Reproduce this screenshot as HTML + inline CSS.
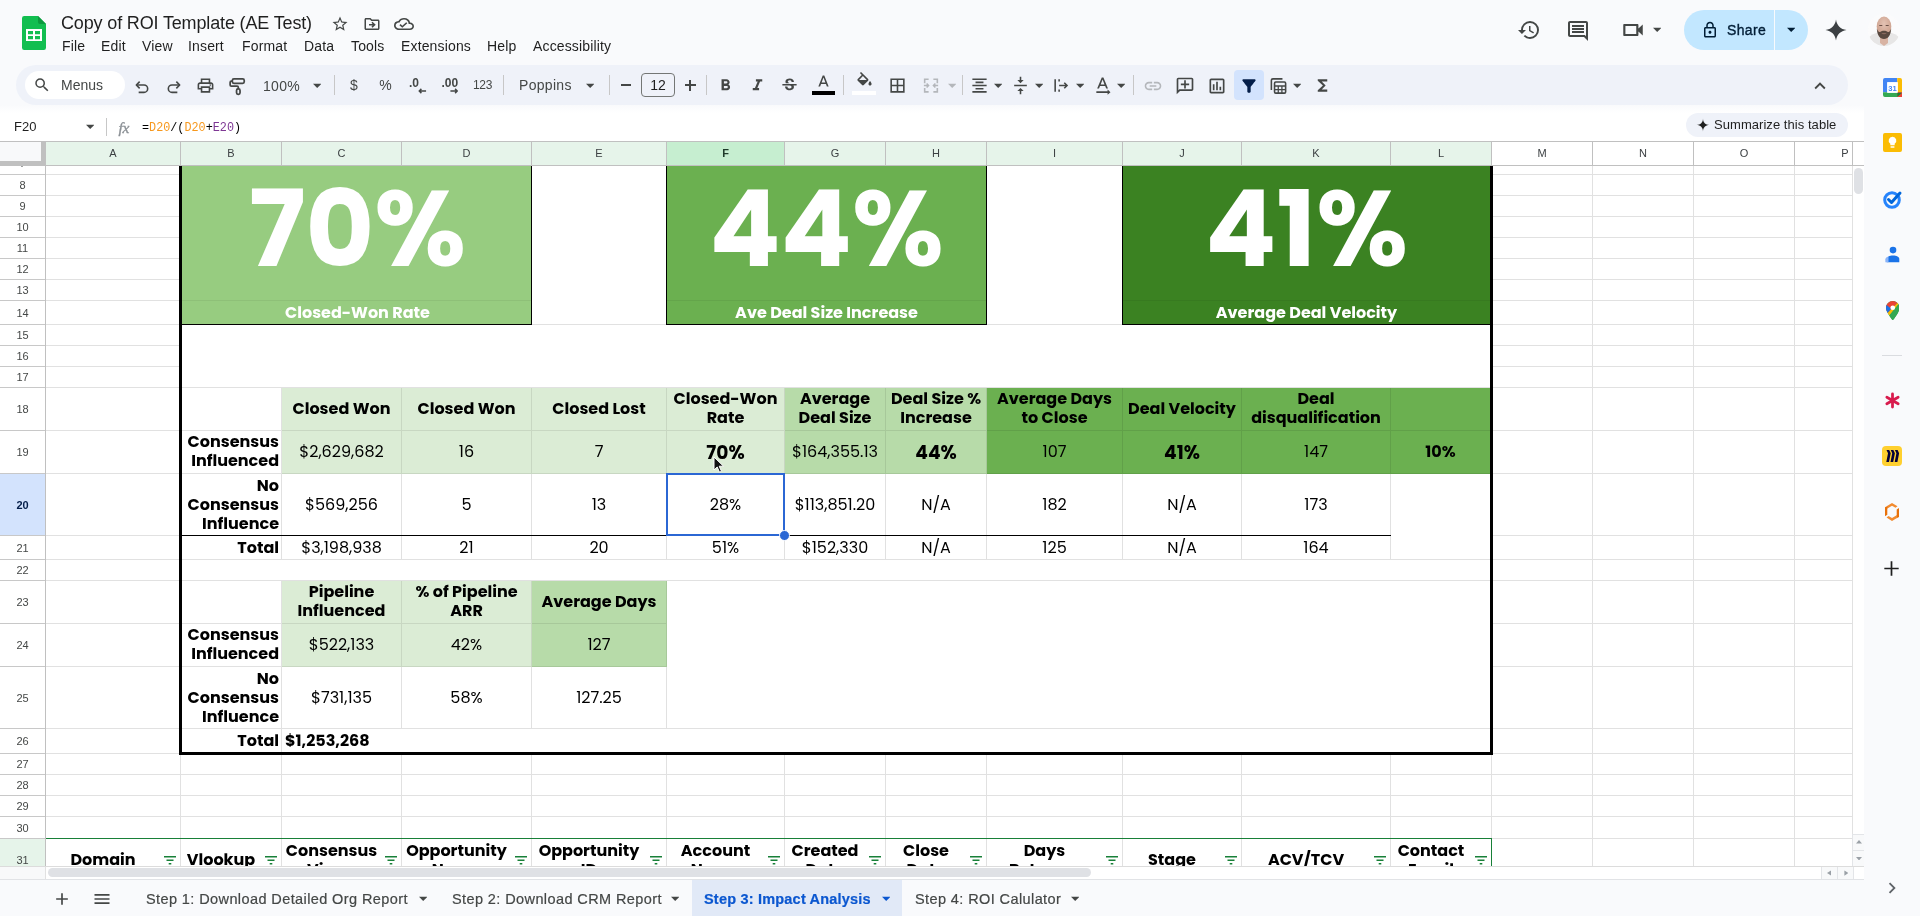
<!DOCTYPE html>
<html lang="en"><head><meta charset="utf-8"><title>Copy of ROI Template (AE Test) - Google Sheets</title>
<style>
*{box-sizing:border-box;margin:0;padding:0}
html,body{width:1920px;height:916px;overflow:hidden;background:#f9fafc}
body{position:relative;font-family:"Liberation Sans",sans-serif;color:#1f1f1f;-webkit-font-smoothing:antialiased}
.a{position:absolute}
#app svg{display:block}
#app div,#app span.p{position:absolute}
.ui{font-family:"Liberation Sans",sans-serif;white-space:nowrap}
.menu{top:37px;height:18px;line-height:18px;font-size:14px;color:#1f1f1f;white-space:nowrap;letter-spacing:.15px}
.ic{fill:#444746}
.sep{width:1px;height:20px;top:75px;background:#c7c7c7}
.tb{top:65px;height:40px}
/* grid */
.ch{top:142px;height:23px;line-height:23px;text-align:center;font-size:11px;color:#3c4043;white-space:nowrap}
.rh{left:0;width:45px;text-align:center;font-size:11px;color:#444746;white-space:nowrap}
.c{font-family:"Poppins","Liberation Sans",sans-serif;display:flex;align-items:center;justify-content:center;text-align:center;color:#000;font-size:16px;line-height:19px;white-space:nowrap;overflow:hidden}
.b{font-weight:700}
.r{justify-content:flex-end;text-align:right}
.hl{background:#e1e1e1;height:1px}
.vl{background:#e1e1e1;width:1px}
.tab{top:880px;height:36px;line-height:38px;font-size:14.500px;-webkit-text-stroke:.2px;color:#444746;white-space:nowrap;font-weight:400}
</style></head>
<body><div id="app" style="will-change:transform">
<!-- ===== title bar ===== -->
<div style="left:22px;top:16px;width:24px;height:34px">
<svg width="24" height="34" viewBox="0 0 24 34"><path d="M2.200 0H16l8 8v23.800A2.200 2.200 0 0 1 21.800 34H2.200A2.200 2.200 0 0 1 0 31.800V2.200A2.200 2.200 0 0 1 2.200 0z" fill="#12be50"/><path d="M16 0l8 8h-6A2 2 0 0 1 16 6z" fill="#0c9a3e"/><path d="M4 13h16v12H4zM6 15v3.200h5V15zM13 15v3.200h5V15zM6 20v3.200h5V20zM13 20v3.200h5V20z" fill="#fff" fill-rule="evenodd"/></svg></div>
<div class="ui" style="left:61px;top:10px;height:26px;line-height:26px;font-size:18px;color:#1f1f1f;letter-spacing:-.15px" id="title">Copy of ROI Template (AE Test)</div>
<div style="left:331px;top:15px"><svg width="18" height="18" viewBox="0 0 24 24" class="ic"><path d="M22 9.240l-7.190-.620L12 2 9.190 8.630 2 9.240l5.460 4.730L5.820 21 12 17.270 18.180 21l-1.630-7.030L22 9.240zM12 15.400l-3.760 2.270 1-4.280-3.320-2.880 4.380-.380L12 6.100l1.710 4.040 4.380.380-3.320 2.880 1 4.280L12 15.400z"/></svg></div>
<div style="left:363px;top:15px"><svg width="18" height="18" viewBox="0 0 24 24" class="ic"><path d="M20 6h-8l-2-2H4c-1.100 0-2 .900-2 2v12c0 1.100.900 2 2 2h16c1.100 0 2-.900 2-2V8c0-1.100-.900-2-2-2zm0 12H4V6h5.170l2 2H20v10zm-7.160-6H8v2h4.840l-1.590 1.590L12.660 17 17 13l-4.340-4-1.410 1.410L12.840 12z"/></svg></div>
<div style="left:394px;top:15px"><svg width="20" height="18" viewBox="0 0 24 24" class="ic" preserveAspectRatio="none"><path d="M19.350 10.040A7.490 7.490 0 0 0 12 4C9.110 4 6.600 5.640 5.350 8.040A5.994 5.994 0 0 0 0 14c0 3.310 2.690 6 6 6h13c2.760 0 5-2.240 5-5 0-2.640-2.050-4.780-4.650-4.960zM19 18H6c-2.210 0-4-1.790-4-4s1.790-4 4-4h.710C7.370 7.690 9.480 6 12 6c3.040 0 5.500 2.460 5.500 5.500v.500H19c1.660 0 3 1.340 3 3s-1.340 3-3 3zm-9-3.820l-2.090-2.090L6.500 13.500 10 17l6.010-6.010-1.410-1.410z"/></svg></div>
<!-- menus -->
<div class="menu ui" style="left:62px">File</div>
<div class="menu ui" style="left:101px">Edit</div>
<div class="menu ui" style="left:142px">View</div>
<div class="menu ui" style="left:188px">Insert</div>
<div class="menu ui" style="left:242px">Format</div>
<div class="menu ui" style="left:304px">Data</div>
<div class="menu ui" style="left:351px">Tools</div>
<div class="menu ui" style="left:401px">Extensions</div>
<div class="menu ui" style="left:487px">Help</div>
<div class="menu ui" style="left:533px">Accessibility</div>
<!-- right icons -->
<div style="left:1517px;top:18px"><svg width="24" height="24" viewBox="0 0 24 24" class="ic"><path d="M13 3a9 9 0 0 0-9 9H1l3.890 3.890.070.140L9 12H6c0-3.870 3.130-7 7-7s7 3.130 7 7-3.130 7-7 7c-1.930 0-3.680-.790-4.940-2.060l-1.420 1.420A8.954 8.954 0 0 0 13 21a9 9 0 0 0 0-18zm-1 5v5l4.250 2.520.770-1.280-3.520-2.090V8z"/></svg></div>
<div style="left:1566px;top:19px"><svg width="24" height="24" viewBox="0 0 24 24" class="ic"><path d="M21.990 4c0-1.100-.890-2-1.990-2H4c-1.100 0-2 .900-2 2v12c0 1.100.900 2 2 2h14l4 4-.010-18zM20 4v13.170L18.830 16H4V4h16zM6 12h12v2H6zm0-3h12v2H6zm0-3h12v2H6z"/></svg></div>
<div style="left:1620px;top:18px"><svg width="26" height="24" viewBox="0 0 24 24" class="ic" preserveAspectRatio="none"><path d="M15 8v8H5V8h10m1-2H4c-.550 0-1 .450-1 1v10c0 .550.450 1 1 1h12c.550 0 1-.450 1-1v-3.500l4 4v-11l-4 4V7c0-.550-.450-1-1-1z"/></svg></div>
<div style="left:1652.8px;top:27.05px"><svg width="8.400" height="5.900" viewBox="7 9 10 7" class="ic"><path d="M7 10l5 5 5-5z"/></svg></div>
<!-- share -->
<div style="left:1684px;top:10px;width:124px;height:40px;border-radius:20px;background:#c2e7ff"></div>
<div style="left:1774px;top:10px;width:1px;height:40px;background:#f9fafc"></div>
<div style="left:1701px;top:21px"><svg width="18" height="18" viewBox="0 0 24 24" fill="#001d35"><path d="M18 8h-1V6c0-2.760-2.240-5-5-5S7 3.240 7 6v2H6c-1.100 0-2 .900-2 2v10c0 1.100.900 2 2 2h12c1.100 0 2-.900 2-2V10c0-1.100-.900-2-2-2zM9 6c0-1.660 1.340-3 3-3s3 1.340 3 3v2H9V6zm9 14H6V10h12v10zm-6-3c1.100 0 2-.900 2-2s-.900-2-2-2-2 .900-2 2 .900 2 2 2z"/></svg></div>
<div class="ui" style="left:1727px;top:20px;height:20px;line-height:20px;font-size:14px;font-weight:400;-webkit-text-stroke:.35px;color:#001d35;letter-spacing:.35px">Share</div>
<div style="left:1786.8px;top:27.05px"><svg width="8.400" height="5.900" viewBox="7 9 10 7" fill="#001d35"><path d="M7 10l5 5 5-5z"/></svg></div>
<!-- gemini -->
<div style="left:1825px;top:19px"><svg width="22" height="22" viewBox="0 0 24 24" fill="#3c4043"><path d="M12 .500C12.900 7 17 11.100 23.500 12 17 12.900 12.900 17 12 23.500 11.100 17 7 12.900 .500 12 7 11.100 11.100 7 12 .500z"/></svg></div>
<!-- avatar -->
<div style="left:1868px;top:14px;width:32px;height:32px;border-radius:50%;overflow:hidden;background:#fbfbfc">
<svg width="32" height="32" viewBox="0 0 32 32"><defs><radialGradient id="sk" cx=".5" cy=".35" r=".7"><stop offset="0" stop-color="#e3c2b3"/><stop offset="1" stop-color="#c89a86"/></radialGradient></defs><rect width="32" height="32" fill="#fbfbfc"/><path d="M0 24c3-3 7-5 10-5.500h12c3 .500 7 2.500 10 5.500v8H0z" fill="#e7e6e6"/><path d="M12 22h8v7l-4 3-4-3z" fill="#d8b3a3"/><ellipse cx="16" cy="12.500" rx="7.300" ry="10" fill="url(#sk)"/><path d="M8.800 14.500c.300 6.500 3 10.500 7.200 10.500s6.900-4 7.200-10.500c-.800 2.500-2 3.600-3.300 3.600-1.200-1-2.400-1.300-3.900-1.300s-2.700.300-3.900 1.300c-1.300 0-2.500-1.100-3.300-3.600z" fill="#5a4940"/><path d="M13.200 19.500c1.800-.600 3.800-.600 5.600 0-1.800.900-3.800.900-5.600 0z" fill="#8a6a5e"/><path d="M11.300 11.500h3M17.700 11.500h3" stroke="#6b5047" stroke-width="1"/></svg></div>
<!-- ===== toolbar ===== -->
<div style="left:16px;top:65px;width:1832px;height:40px;border-radius:20px;background:#eff2f9"></div>
<div style="left:25px;top:71px;width:100px;height:28px;border-radius:14px;background:#fff"></div>
<div style="left:33px;top:76px"><svg width="18" height="18" viewBox="0 0 24 24" class="ic"><path d="M15.500 14h-.790l-.280-.270A6.471 6.471 0 0 0 16 9.500 6.500 6.500 0 1 0 9.500 16c1.610 0 3.090-.590 4.230-1.570l.270.280v.790l5 4.990L20.490 19l-4.990-5zm-6 0C7.010 14 5 11.990 5 9.500S7.010 5 9.500 5 14 7.010 14 9.500 11.990 14 9.500 14z"/></svg></div>
<div class="ui" style="left:61px;top:75px;height:20px;line-height:20px;font-size:14px;color:#444746">Menus</div>
<!-- undo / redo -->
<div style="left:134px;top:78.500px"><svg width="16" height="16" viewBox="0 0 24 24" fill="none" stroke="#444746" stroke-width="2.400" stroke-linejoin="round" stroke-linecap="butt"><path d="M8.500 4L3.500 9l5 5"/><path d="M4 9h11a5.500 5.500 0 0 1 0 11H7"/></svg></div>
<div style="left:165.500px;top:78.500px"><svg width="16" height="16" viewBox="0 0 24 24" fill="none" stroke="#444746" stroke-width="2.400" stroke-linejoin="round"><path d="M15.500 4l5 5-5 5"/><path d="M20 9H9a5.500 5.500 0 0 0 0 11h8"/></svg></div>
<div style="left:196px;top:76px"><svg width="19" height="19" viewBox="0 0 24 24" class="ic"><path d="M19 8h-1V3H6v5H5c-1.660 0-3 1.340-3 3v6h4v4h12v-4h4v-6c0-1.660-1.340-3-3-3zM8 5h8v3H8V5zm8 14H8v-4h8v4zm2-4v-2H6v2H4v-4c0-.550.450-1 1-1h14c.550 0 1 .450 1 1v4h-2z"/><circle cx="18" cy="11.500" r="1"/></svg></div>
<div style="left:227.500px;top:77px"><svg width="19" height="19" viewBox="0 0 24 24" fill="none" stroke="#444746" stroke-width="2.200" stroke-linejoin="round"><rect x="5.500" y="2.500" width="15" height="5.600" rx="2"/><path d="M5.500 5.300H4.200a1.500 1.500 0 0 0-1.500 1.500v3.200a1.500 1.500 0 0 0 1.500 1.500h7.300a1.500 1.500 0 0 1 1.500 1.500v2"/><rect x="10.800" y="15" width="4.400" height="7" rx="2"/></svg></div>
<div class="ui" style="left:263px;top:76px;height:20px;line-height:20px;font-size:14px;color:#444746;letter-spacing:.3px">100%</div>
<div style="left:312.8px;top:83.05px"><svg width="8.400" height="5.900" viewBox="7 9 10 7" class="ic"><path d="M7 10l5 5 5-5z"/></svg></div>
<div class="sep" style="left:334px"></div>
<div class="ui" style="left:349px;top:75px;width:10px;height:20px;line-height:20px;font-size:14px;color:#444746;text-align:center">$</div>
<div class="ui" style="left:378px;top:75px;width:15px;height:20px;line-height:20px;font-size:14px;color:#444746;text-align:center">%</div>
<div class="ui" style="left:409px;top:75px;height:16px;line-height:16px;font-size:12px;color:#444746;font-weight:700">.0</div>
<div style="left:418px;top:88px"><svg width="8.500" height="6" viewBox="0 0 10 7" fill="none" stroke="#444746" stroke-width="1.700"><path d="M9.500 3.500H1.500M4 1L1.500 3.500 4 6"/></svg></div>
<div class="ui" style="left:441.500px;top:75px;height:16px;line-height:16px;font-size:12px;color:#444746;font-weight:700">.00</div>
<div style="left:449.500px;top:88px"><svg width="8.500" height="6" viewBox="0 0 10 7" fill="none" stroke="#444746" stroke-width="1.700"><path d="M.500 3.500h8M6 1l2.500 2.500L6 6"/></svg></div>
<div class="ui" style="left:473px;top:76px;height:18px;line-height:18px;font-size:12px;color:#444746;letter-spacing:-.3px">123</div>
<div class="sep" style="left:503px"></div>
<div class="ui" style="left:519px;top:75px;height:20px;line-height:20px;font-size:14px;color:#444746;letter-spacing:.3px">Poppins</div>
<div style="left:585.8px;top:83.05px"><svg width="8.400" height="5.900" viewBox="7 9 10 7" class="ic"><path d="M7 10l5 5 5-5z"/></svg></div>
<div class="sep" style="left:609px"></div>
<div style="left:620.500px;top:84.300px;width:10px;height:1.500px;background:#444746"></div>
<div style="left:641px;top:73px;width:34px;height:24px;border:1px solid #747775;border-radius:4px"></div>
<div class="ui" style="left:641px;top:75px;width:34px;height:20px;line-height:20px;font-size:14px;color:#1f1f1f;text-align:center">12</div>
<div style="left:684.500px;top:84.300px;width:11px;height:1.500px;background:#444746"></div>
<div style="left:689.250px;top:79.500px;width:1.500px;height:11px;background:#444746"></div>
<div class="sep" style="left:706px"></div>
<div style="left:716px;top:76px"><svg width="19" height="19" viewBox="0 0 24 24" class="ic"><path d="M15.600 10.790c.970-.670 1.650-1.770 1.650-2.790 0-2.260-1.750-4-4-4H7v14h7.040c2.090 0 3.710-1.700 3.710-3.790 0-1.520-.860-2.820-2.150-3.420zM10 6.500h3c.830 0 1.500.670 1.500 1.500s-.670 1.500-1.500 1.500h-3v-3zm3.500 9H10v-3h3.500c.830 0 1.500.670 1.500 1.500s-.670 1.500-1.500 1.500z"/></svg></div>
<div style="left:748px;top:76px"><svg width="19" height="19" viewBox="0 0 24 24" class="ic"><path d="M10 4v3h2.210l-3.420 8H6v3h8v-3h-2.210l3.420-8H18V4z"/></svg></div>
<div style="left:780px;top:76px"><svg width="19" height="19" viewBox="0 0 24 24" class="ic"><path d="M6.850 7.080C6.850 4.370 9.450 3 12.240 3c1.640 0 3 .490 3.900 1.280.770.650 1.460 1.730 1.460 3.240h-3.010c0-.310-.050-.590-.150-.850-.290-.860-1.200-1.280-2.250-1.280-1.860 0-2.340 1.020-2.340 1.700 0 .480.250.880.740 1.210.380.250.770.480 1.410.700H7.390c-.210-.340-.540-.890-.540-1.920zM21 12v-2H3v2h9.620c1.150.450 1.960.750 1.960 1.970 0 1-.810 1.670-2.280 1.670-1.540 0-2.930-.540-2.930-2.510H6.400c0 .550.080 1.130.240 1.580.810 2.290 3.290 3.300 5.670 3.300 2.270 0 5.300-.890 5.300-4.050 0-.300-.010-1.160-.480-1.940H21V12z"/></svg></div>
<div style="left:814px;top:73px"><svg width="19" height="19" viewBox="0 0 24 24" class="ic"><path d="M11 3L5.500 17h2.250l1.120-3h6.250l1.120 3h2.250L13 3h-2zm-1.380 9L12 5.670 14.380 12H9.620z"/></svg></div>
<div style="left:812px;top:91px;width:23px;height:4px;background:#000"></div>
<div class="sep" style="left:843px"></div>
<div style="left:855px;top:72px"><svg width="19" height="19" viewBox="0 0 24 24" class="ic"><path d="M16.560 8.940L7.620 0 6.210 1.410l2.380 2.380-5.150 5.150c-.590.590-.590 1.540 0 2.120l5.500 5.500c.290.290.680.440 1.060.440s.770-.150 1.060-.440l5.500-5.500c.590-.580.590-1.530 0-2.120zM5.210 10L10 5.210 14.790 10H5.210zM19 11.500s-2 2.170-2 3.500c0 1.100.900 2 2 2s2-.900 2-2c0-1.330-2-3.500-2-3.500z"/></svg></div>
<div style="left:852px;top:91px;width:24px;height:4px;background:#fff"></div>
<div style="left:888px;top:76px"><svg width="19" height="19" viewBox="0 0 24 24" class="ic"><path d="M3 3v18h18V3H3zm8 16H5v-6h6v6zm0-8H5V5h6v6zm8 8h-6v-6h6v6zm0-8h-6V5h6v6z"/></svg></div>
<div style="left:921px;top:76px"><svg width="20" height="19" viewBox="0 0 24 24" fill="none" stroke="#b4b7bb" stroke-width="2"><path d="M4 9V4h5M15 4h5v5M4 15v5h5M15 20h5v-5" /><path d="M3 12h6M6.500 9.500L9 12l-2.500 2.500M21 12h-6M17.500 9.500L15 12l2.500 2.500" stroke-width="1.800"/></svg></div>
<div style="left:947.8px;top:83.05px"><svg width="8.400" height="5.900" viewBox="7 9 10 7" fill="#b4b7bb"><path d="M7 10l5 5 5-5z"/></svg></div>
<div class="sep" style="left:962px"></div>
<div style="left:970px;top:76px"><svg width="19" height="19" viewBox="0 0 24 24" class="ic"><path d="M7 15v2h10v-2H7zm-4 6h18v-2H3v2zm0-8h18v-2H3v2zm4-6v2h10V7H7zM3 3v2h18V3H3z"/></svg></div>
<div style="left:993.8px;top:83.05px"><svg width="8.400" height="5.900" viewBox="7 9 10 7" class="ic"><path d="M7 10l5 5 5-5z"/></svg></div>
<div style="left:1011px;top:76px"><svg width="19" height="19" viewBox="0 0 24 24" class="ic"><path d="M8 19h3v4h2v-4h3l-4-4-4 4zm8-14h-3V1h-2v4H8l4 4 4-4zM4 11v2h16v-2H4z"/></svg></div>
<div style="left:1034.8px;top:83.05px"><svg width="8.400" height="5.900" viewBox="7 9 10 7" class="ic"><path d="M7 10l5 5 5-5z"/></svg></div>
<div style="left:1052px;top:76px"><svg width="19" height="19" viewBox="0 0 24 24" fill="none" stroke="#444746" stroke-width="2"><path d="M4 4v16M9 4v3M9 17v3M9 12h10M15.500 8.500L19 12l-3.500 3.500"/></svg></div>
<div style="left:1075.8px;top:83.05px"><svg width="8.400" height="5.900" viewBox="7 9 10 7" class="ic"><path d="M7 10l5 5 5-5z"/></svg></div>
<div style="left:1093px;top:75px"><svg width="20" height="21" viewBox="0 0 24 25" class="ic"><path d="M10.500 3L5 16h2.200l1.200-3h6.200l1.200 3H18L12.500 3h-2zm-1.300 8.200L11.500 5.400l2.300 5.800H9.200z"/><path d="M4 19.500h13.500v-2.200l3.500 3.200-3.500 3.200v-2.200H4z"/></svg></div>
<div style="left:1116.8px;top:83.05px"><svg width="8.400" height="5.900" viewBox="7 9 10 7" class="ic"><path d="M7 10l5 5 5-5z"/></svg></div>
<div class="sep" style="left:1133px"></div>
<div style="left:1143px;top:76px"><svg width="20" height="20" viewBox="0 0 24 24" fill="#b4b7bb"><path d="M3.900 12c0-1.710 1.390-3.100 3.100-3.100h4V7H7c-2.760 0-5 2.240-5 5s2.240 5 5 5h4v-1.900H7c-1.710 0-3.100-1.390-3.100-3.100zM8 13h8v-2H8v2zm9-6h-4v1.900h4c1.710 0 3.100 1.390 3.100 3.100s-1.390 3.100-3.100 3.100h-4V17h4c2.760 0 5-2.240 5-5s-2.240-5-5-5z"/></svg></div>
<div style="left:1175px;top:76px"><svg width="20" height="20" viewBox="0 0 24 24" class="ic"><path d="M2 4c0-1.100.900-2 2-2h16c1.100 0 2 .900 2 2v12c0 1.100-.900 2-2 2H6l-4 4V4zm2 13.170L5.170 16H20V4H4v13.170zM11 5h2v4h4v2h-4v4h-2v-4H7V9h4z"/></svg></div>
<div style="left:1207px;top:76px"><svg width="20" height="20" viewBox="0 0 24 24" class="ic"><path d="M9 17H7v-7h2v7zm4 0h-2V7h2v10zm4 0h-2v-4h2v4zm2 2H5V5h14v14zm0-16H5c-1.100 0-2 .900-2 2v14c0 1.100.900 2 2 2h14c1.100 0 2-.900 2-2V5c0-1.100-.900-2-2-2z"/></svg></div>
<div style="left:1234px;top:70px;width:30px;height:30px;border-radius:4px;background:#d3e3fd"></div>
<div style="left:1239px;top:76px"><svg width="20" height="20" viewBox="0 0 24 24" fill="#041e49"><path d="M4.250 5.610C6.270 8.200 10 13 10 13v6c0 .550.450 1 1 1h2c.550 0 1-.450 1-1v-6s3.720-4.800 5.740-7.390A.998.998 0 0 0 18.950 4H5.040c-.830 0-1.300.950-.790 1.610z"/></svg></div>
<div style="left:1269px;top:76px"><svg width="19" height="20" viewBox="0 0 24 24" fill="none" stroke="#444746" stroke-width="2"><path d="M3 17V5a2 2 0 0 1 2-2h12"/><rect x="7" y="7" width="14" height="14" rx="1.500"/><path d="M7 12h14M11.700 12v9M16.300 12v9M7 16.500h14" stroke-width="1.600"/></svg></div>
<div style="left:1292.8px;top:83.05px"><svg width="8.400" height="5.900" viewBox="7 9 10 7" class="ic"><path d="M7 10l5 5 5-5z"/></svg></div>
<div style="left:1313px;top:76px"><svg width="19" height="19" viewBox="0 0 24 24" class="ic"><path d="M18 4H6v2l6.500 6L6 18v2h12v-3h-7l5-5-5-5h7z"/></svg></div>
<div style="left:1809px;top:75px"><svg width="22" height="22" viewBox="0 0 24 24" class="ic"><path d="M12 8l-6 6 1.410 1.410L12 10.830l4.590 4.580L18 14z"/></svg></div>
<!-- ===== formula bar ===== -->
<div style="left:0;top:105px;width:1864px;height:37px;background:linear-gradient(#f9fafc 0,#fff 8px)"></div>
<div class="ui" style="left:14px;top:117px;height:20px;line-height:20px;font-size:13px;color:#1f1f1f">F20</div>
<div style="left:85.8px;top:124.05px"><svg width="8.400" height="5.900" viewBox="7 9 10 7" class="ic"><path d="M7 10l5 5 5-5z"/></svg></div>
<div style="left:106px;top:118px;width:1px;height:18px;background:#c7c7c7"></div>
<div style="left:118.500px;top:118px;height:20px;line-height:20px;font-family:'Liberation Serif',serif;font-style:italic;font-size:15.500px;color:#8c9196;-webkit-text-stroke:.35px #8c9196;letter-spacing:-.3px">fx</div>
<div style="left:141.700px;top:117.500px;height:20px;line-height:20px;font-family:'Liberation Mono',monospace;font-size:13.300px;color:#000;white-space:pre;transform:scaleX(.886);transform-origin:0 50%">=<span style="color:#f7981d">D20</span>/(<span style="color:#f7981d">D20</span>+<span style="color:#7e3794">E20</span>)</div>
<div style="left:1686px;top:113px;width:162px;height:24px;border-radius:12px;background:#eff2f9"></div>
<div style="left:1696px;top:118px"><svg width="14" height="14" viewBox="0 0 24 24" fill="#1f1f1f"><path d="M12 1C12 7.600 16.400 12 23 12 16.400 12 12 16.400 12 23 12 16.400 7.600 12 1 12 7.600 12 12 7.600 12 1z"/></svg></div>
<div class="ui" style="left:1714px;top:115px;height:20px;line-height:20px;font-size:13px;color:#1f1f1f;letter-spacing:.05px" id="summ">Summarize this table</div>
<!-- ===== grid ===== -->
<div id="grid" style="left:0;top:141px;width:1864px;height:725px;background:#fff;overflow:hidden">
<div style="left:0;top:-141px;width:1864px;height:916px">
<div style="left:46px;top:174px;width:1806px;height:1px;background:#e1e1e1;"></div>
<div style="left:46px;top:195px;width:1806px;height:1px;background:#e1e1e1;"></div>
<div style="left:46px;top:216px;width:1806px;height:1px;background:#e1e1e1;"></div>
<div style="left:46px;top:237px;width:1806px;height:1px;background:#e1e1e1;"></div>
<div style="left:46px;top:258px;width:1806px;height:1px;background:#e1e1e1;"></div>
<div style="left:46px;top:279px;width:1806px;height:1px;background:#e1e1e1;"></div>
<div style="left:46px;top:300px;width:1806px;height:1px;background:#e1e1e1;"></div>
<div style="left:46px;top:324px;width:1806px;height:1px;background:#e1e1e1;"></div>
<div style="left:46px;top:345px;width:1806px;height:1px;background:#e1e1e1;"></div>
<div style="left:46px;top:366px;width:1806px;height:1px;background:#e1e1e1;"></div>
<div style="left:46px;top:387px;width:1806px;height:1px;background:#e1e1e1;"></div>
<div style="left:46px;top:430px;width:1806px;height:1px;background:#e1e1e1;"></div>
<div style="left:46px;top:473px;width:1806px;height:1px;background:#e1e1e1;"></div>
<div style="left:46px;top:535px;width:1806px;height:1px;background:#e1e1e1;"></div>
<div style="left:46px;top:559px;width:1806px;height:1px;background:#e1e1e1;"></div>
<div style="left:46px;top:580px;width:1806px;height:1px;background:#e1e1e1;"></div>
<div style="left:46px;top:623px;width:1806px;height:1px;background:#e1e1e1;"></div>
<div style="left:46px;top:666px;width:1806px;height:1px;background:#e1e1e1;"></div>
<div style="left:46px;top:728px;width:1806px;height:1px;background:#e1e1e1;"></div>
<div style="left:46px;top:753px;width:1806px;height:1px;background:#e1e1e1;"></div>
<div style="left:46px;top:774px;width:1806px;height:1px;background:#e1e1e1;"></div>
<div style="left:46px;top:795px;width:1806px;height:1px;background:#e1e1e1;"></div>
<div style="left:46px;top:816px;width:1806px;height:1px;background:#e1e1e1;"></div>
<div style="left:46px;top:838px;width:1806px;height:1px;background:#e1e1e1;"></div>
<div style="left:180px;top:166px;width:1px;height:700px;background:#e1e1e1;"></div>
<div style="left:281px;top:166px;width:1px;height:700px;background:#e1e1e1;"></div>
<div style="left:401px;top:166px;width:1px;height:700px;background:#e1e1e1;"></div>
<div style="left:531px;top:166px;width:1px;height:700px;background:#e1e1e1;"></div>
<div style="left:666px;top:166px;width:1px;height:700px;background:#e1e1e1;"></div>
<div style="left:784px;top:166px;width:1px;height:700px;background:#e1e1e1;"></div>
<div style="left:885px;top:166px;width:1px;height:700px;background:#e1e1e1;"></div>
<div style="left:986px;top:166px;width:1px;height:700px;background:#e1e1e1;"></div>
<div style="left:1122px;top:166px;width:1px;height:700px;background:#e1e1e1;"></div>
<div style="left:1241px;top:166px;width:1px;height:700px;background:#e1e1e1;"></div>
<div style="left:1390px;top:166px;width:1px;height:700px;background:#e1e1e1;"></div>
<div style="left:1491px;top:166px;width:1px;height:700px;background:#e1e1e1;"></div>
<div style="left:1592px;top:166px;width:1px;height:700px;background:#e1e1e1;"></div>
<div style="left:1693px;top:166px;width:1px;height:700px;background:#e1e1e1;"></div>
<div style="left:1794px;top:166px;width:1px;height:700px;background:#e1e1e1;"></div>
<div style="left:1852px;top:166px;width:1px;height:700px;background:#e1e1e1;"></div>
<div style="left:181px;top:166px;width:1310px;height:587px;background:#fff;"></div>
<div style="left:46px;top:839px;width:1445px;height:27px;background:#fff;"></div>
<div style="left:532px;top:324px;width:134px;height:1px;background:#e1e1e1;"></div>
<div style="left:987px;top:324px;width:135px;height:1px;background:#e1e1e1;"></div>
<div style="left:181px;top:387px;width:1310px;height:1px;background:#e1e1e1;"></div>
<div style="left:181px;top:430px;width:1310px;height:1px;background:#e1e1e1;"></div>
<div style="left:181px;top:473px;width:1310px;height:1px;background:#e1e1e1;"></div>
<div style="left:181px;top:559px;width:1310px;height:1px;background:#e1e1e1;"></div>
<div style="left:181px;top:580px;width:1310px;height:1px;background:#e1e1e1;"></div>
<div style="left:181px;top:623px;width:486px;height:1px;background:#e1e1e1;"></div>
<div style="left:181px;top:666px;width:486px;height:1px;background:#e1e1e1;"></div>
<div style="left:181px;top:728px;width:1310px;height:1px;background:#e1e1e1;"></div>
<div style="left:281px;top:388px;width:1px;height:171px;background:#e1e1e1;"></div>
<div style="left:401px;top:388px;width:1px;height:171px;background:#e1e1e1;"></div>
<div style="left:531px;top:388px;width:1px;height:171px;background:#e1e1e1;"></div>
<div style="left:666px;top:388px;width:1px;height:171px;background:#e1e1e1;"></div>
<div style="left:784px;top:388px;width:1px;height:171px;background:#e1e1e1;"></div>
<div style="left:885px;top:388px;width:1px;height:171px;background:#e1e1e1;"></div>
<div style="left:986px;top:388px;width:1px;height:171px;background:#e1e1e1;"></div>
<div style="left:1122px;top:388px;width:1px;height:171px;background:#e1e1e1;"></div>
<div style="left:1241px;top:388px;width:1px;height:171px;background:#e1e1e1;"></div>
<div style="left:1390px;top:388px;width:1px;height:171px;background:#e1e1e1;"></div>
<div style="left:281px;top:581px;width:1px;height:147px;background:#e1e1e1;"></div>
<div style="left:401px;top:581px;width:1px;height:147px;background:#e1e1e1;"></div>
<div style="left:531px;top:581px;width:1px;height:147px;background:#e1e1e1;"></div>
<div style="left:666px;top:581px;width:1px;height:147px;background:#e1e1e1;"></div>
<div style="left:281px;top:729px;width:1px;height:23px;background:#e1e1e1;"></div>
<div style="left:181px;top:166px;width:350px;height:158px;background:#97cc80;"></div>
<div style="left:667px;top:166px;width:319px;height:158px;background:#6bb050;"></div>
<div style="left:1123px;top:166px;width:368px;height:158px;background:#3b8222;"></div>
<div style="left:282px;top:388px;width:503px;height:86px;background:#dbecd5;"></div>
<div style="left:785px;top:388px;width:202px;height:86px;background:#b7dba9;"></div>
<div style="left:987px;top:388px;width:504px;height:86px;background:#6bb050;"></div>
<div style="left:282px;top:581px;width:250px;height:86px;background:#dbecd5;"></div>
<div style="left:532px;top:581px;width:135px;height:86px;background:#b7dba9;"></div>
<div style="left:181px;top:300px;width:350px;height:1px;background:rgba(0,0,0,.06);"></div>
<div style="left:667px;top:300px;width:319px;height:1px;background:rgba(0,0,0,.06);"></div>
<div style="left:1123px;top:300px;width:368px;height:1px;background:rgba(0,0,0,.06);"></div>
<div style="left:282px;top:430px;width:1209px;height:1px;background:rgba(0,0,0,.085);"></div>
<div style="left:282px;top:473px;width:1209px;height:1px;background:rgba(0,0,0,.085);"></div>
<div style="left:401px;top:388px;width:1px;height:42px;background:rgba(0,0,0,.085);"></div>
<div style="left:401px;top:431px;width:1px;height:42px;background:rgba(0,0,0,.085);"></div>
<div style="left:531px;top:388px;width:1px;height:42px;background:rgba(0,0,0,.085);"></div>
<div style="left:531px;top:431px;width:1px;height:42px;background:rgba(0,0,0,.085);"></div>
<div style="left:666px;top:388px;width:1px;height:42px;background:rgba(0,0,0,.085);"></div>
<div style="left:666px;top:431px;width:1px;height:42px;background:rgba(0,0,0,.085);"></div>
<div style="left:784px;top:388px;width:1px;height:42px;background:rgba(0,0,0,.085);"></div>
<div style="left:784px;top:431px;width:1px;height:42px;background:rgba(0,0,0,.085);"></div>
<div style="left:885px;top:388px;width:1px;height:42px;background:rgba(0,0,0,.085);"></div>
<div style="left:885px;top:431px;width:1px;height:42px;background:rgba(0,0,0,.085);"></div>
<div style="left:986px;top:388px;width:1px;height:42px;background:rgba(0,0,0,.085);"></div>
<div style="left:986px;top:431px;width:1px;height:42px;background:rgba(0,0,0,.085);"></div>
<div style="left:1122px;top:388px;width:1px;height:42px;background:rgba(0,0,0,.085);"></div>
<div style="left:1122px;top:431px;width:1px;height:42px;background:rgba(0,0,0,.085);"></div>
<div style="left:1241px;top:388px;width:1px;height:42px;background:rgba(0,0,0,.085);"></div>
<div style="left:1241px;top:431px;width:1px;height:42px;background:rgba(0,0,0,.085);"></div>
<div style="left:1390px;top:388px;width:1px;height:42px;background:rgba(0,0,0,.085);"></div>
<div style="left:1390px;top:431px;width:1px;height:42px;background:rgba(0,0,0,.085);"></div>
<div style="left:282px;top:623px;width:385px;height:1px;background:rgba(0,0,0,.085);"></div>
<div style="left:282px;top:666px;width:385px;height:1px;background:rgba(0,0,0,.085);"></div>
<div style="left:401px;top:581px;width:1px;height:42px;background:rgba(0,0,0,.085);"></div>
<div style="left:401px;top:624px;width:1px;height:42px;background:rgba(0,0,0,.085);"></div>
<div style="left:531px;top:581px;width:1px;height:42px;background:rgba(0,0,0,.085);"></div>
<div style="left:531px;top:624px;width:1px;height:42px;background:rgba(0,0,0,.085);"></div>
<div style="left:666px;top:581px;width:1px;height:42px;background:rgba(0,0,0,.085);"></div>
<div style="left:666px;top:624px;width:1px;height:42px;background:rgba(0,0,0,.085);"></div>
<div style="left:181px;top:324px;width:351px;height:1px;background:#000;"></div>
<div style="left:531px;top:166px;width:1px;height:159px;background:#000;"></div>
<div style="left:666px;top:166px;width:1px;height:159px;background:#000;"></div>
<div style="left:666px;top:324px;width:321px;height:1px;background:#000;"></div>
<div style="left:986px;top:166px;width:1px;height:159px;background:#000;"></div>
<div style="left:1122px;top:166px;width:1px;height:159px;background:#000;"></div>
<div style="left:1122px;top:324px;width:369px;height:1px;background:#000;"></div>
<div style="left:181px;top:535px;width:1210px;height:1px;background:#000;"></div>
<div style="left:179px;top:166px;width:3px;height:589px;background:#000;"></div>
<div style="left:1490px;top:166px;width:3px;height:589px;background:#000;"></div>
<div style="left:179px;top:752px;width:1314px;height:3px;background:#000;"></div>
<div style="left:180px;top:839px;width:1px;height:27px;background:#e1e1e1;"></div>
<div style="left:281px;top:839px;width:1px;height:27px;background:#e1e1e1;"></div>
<div style="left:401px;top:839px;width:1px;height:27px;background:#e1e1e1;"></div>
<div style="left:531px;top:839px;width:1px;height:27px;background:#e1e1e1;"></div>
<div style="left:666px;top:839px;width:1px;height:27px;background:#e1e1e1;"></div>
<div style="left:784px;top:839px;width:1px;height:27px;background:#e1e1e1;"></div>
<div style="left:885px;top:839px;width:1px;height:27px;background:#e1e1e1;"></div>
<div style="left:986px;top:839px;width:1px;height:27px;background:#e1e1e1;"></div>
<div style="left:1122px;top:839px;width:1px;height:27px;background:#e1e1e1;"></div>
<div style="left:1241px;top:839px;width:1px;height:27px;background:#e1e1e1;"></div>
<div style="left:1390px;top:839px;width:1px;height:27px;background:#e1e1e1;"></div>
<div style="left:46px;top:838px;width:1446px;height:1px;background:#188038;"></div>
<div style="left:1491px;top:838px;width:1px;height:28px;background:#188038;"></div>
<div class="c" style="left:181px;top:155px;width:350px;height:147px;font-size:105.5px;line-height:110px;font-weight:700;color:#fff;overflow:visible;padding-left:3px">70%</div>
<div class="c" style="left:667px;top:155px;width:319px;height:147px;font-size:105.5px;line-height:110px;font-weight:700;color:#fff;overflow:visible">44%</div>
<div class="c" style="left:1123px;top:155px;width:367px;height:147px;font-size:105.5px;line-height:110px;font-weight:700;color:#fff;overflow:visible">41%</div>
<div class="c" style="left:181px;top:301px;width:350px;height:23px;font-weight:700;color:#fff;padding-left:3px">Closed-Won Rate</div>
<div class="c" style="left:667px;top:301px;width:319px;height:23px;font-weight:700;color:#fff">Ave Deal Size Increase</div>
<div class="c" style="left:1123px;top:301px;width:367px;height:23px;font-weight:700;color:#fff">Average Deal Velocity</div>
<div class="c b" style="left:282px;top:387px;width:119px;height:42px;">Closed Won</div>
<div class="c b" style="left:402px;top:387px;width:129px;height:42px;">Closed Won</div>
<div class="c b" style="left:532px;top:387px;width:134px;height:42px;">Closed Lost</div>
<div class="c b" style="left:667px;top:387px;width:117px;height:42px;">Closed-Won<br>Rate</div>
<div class="c b" style="left:785px;top:387px;width:100px;height:42px;">Average<br>Deal Size</div>
<div class="c b" style="left:886px;top:387px;width:100px;height:42px;">Deal Size %<br>Increase</div>
<div class="c b" style="left:987px;top:387px;width:135px;height:42px;">Average Days<br>to Close</div>
<div class="c b" style="left:1123px;top:387px;width:118px;height:42px;">Deal Velocity</div>
<div class="c b" style="left:1242px;top:387px;width:148px;height:42px;">Deal<br>disqualification</div>
<div class="c" style="left:282px;top:430px;width:119px;height:42px;">$2,629,682</div>
<div class="c" style="left:402px;top:430px;width:129px;height:42px;">16</div>
<div class="c" style="left:532px;top:430px;width:134px;height:42px;">7</div>
<div class="c" style="left:785px;top:430px;width:100px;height:42px;">$164,355.13</div>
<div class="c" style="left:987px;top:430px;width:135px;height:42px;">107</div>
<div class="c" style="left:1242px;top:430px;width:148px;height:42px;">147</div>
<div class="c" style="left:667px;top:430px;width:117px;height:42px;font-size:18.670px;font-weight:700;line-height:22px;padding-top:4px">70%</div>
<div class="c" style="left:886px;top:430px;width:100px;height:42px;font-size:18.670px;font-weight:700;line-height:22px;padding-top:4px">44%</div>
<div class="c" style="left:1123px;top:430px;width:118px;height:42px;font-size:18.670px;font-weight:700;line-height:22px;padding-top:4px">41%</div>
<div class="c b" style="left:1391px;top:430px;width:99px;height:42px;">10%</div>
<div class="c" style="left:282px;top:474px;width:119px;height:61px;">$569,256</div>
<div class="c" style="left:402px;top:474px;width:129px;height:61px;">5</div>
<div class="c" style="left:532px;top:474px;width:134px;height:61px;">13</div>
<div class="c" style="left:667px;top:474px;width:117px;height:61px;">28%</div>
<div class="c" style="left:785px;top:474px;width:100px;height:61px;">$113,851.20</div>
<div class="c" style="left:886px;top:474px;width:100px;height:61px;">N/A</div>
<div class="c" style="left:987px;top:474px;width:135px;height:61px;">182</div>
<div class="c" style="left:1123px;top:474px;width:118px;height:61px;">N/A</div>
<div class="c" style="left:1242px;top:474px;width:148px;height:61px;">173</div>
<div class="c" style="left:282px;top:536px;width:119px;height:23px;">$3,198,938</div>
<div class="c" style="left:402px;top:536px;width:129px;height:23px;">21</div>
<div class="c" style="left:532px;top:536px;width:134px;height:23px;">20</div>
<div class="c" style="left:667px;top:536px;width:117px;height:23px;">51%</div>
<div class="c" style="left:785px;top:536px;width:100px;height:23px;">$152,330</div>
<div class="c" style="left:886px;top:536px;width:100px;height:23px;">N/A</div>
<div class="c" style="left:987px;top:536px;width:135px;height:23px;">125</div>
<div class="c" style="left:1123px;top:536px;width:118px;height:23px;">N/A</div>
<div class="c" style="left:1242px;top:536px;width:148px;height:23px;">164</div>
<div class="c b r" style="left:181px;top:430px;width:98px;height:42px;">Consensus<br>Influenced</div>
<div class="c b r" style="left:181px;top:623px;width:98px;height:42px;">Consensus<br>Influenced</div>
<div class="c b r" style="left:181px;top:474px;width:98px;height:61px;">No<br>Consensus<br>Influence</div>
<div class="c b r" style="left:181px;top:667px;width:98px;height:61px;">No<br>Consensus<br>Influence</div>
<div class="c b r" style="left:181px;top:536px;width:98px;height:23px;">Total</div>
<div class="c b r" style="left:181px;top:729px;width:98px;height:23px;">Total</div>
<div class="c b" style="left:282px;top:580px;width:119px;height:42px;">Pipeline<br>Influenced</div>
<div class="c b" style="left:402px;top:580px;width:129px;height:42px;">% of Pipeline<br>ARR</div>
<div class="c b" style="left:532px;top:580px;width:134px;height:42px;">Average Days</div>
<div class="c" style="left:282px;top:623px;width:119px;height:42px;">$522,133</div>
<div class="c" style="left:402px;top:623px;width:129px;height:42px;">42%</div>
<div class="c" style="left:532px;top:623px;width:134px;height:42px;">127</div>
<div class="c" style="left:282px;top:667px;width:119px;height:61px;">$731,135</div>
<div class="c" style="left:402px;top:667px;width:129px;height:61px;">58%</div>
<div class="c" style="left:532px;top:667px;width:134px;height:61px;">127.25</div>
<div class="c b" style="left:282px;top:729px;width:249px;height:23px;justify-content:flex-start;padding-left:3px">$1,253,268</div>
<div class="c b" style="left:46px;top:839px;width:114px;height:41px;">Domain</div>
<div style="left:164px;top:856px"><svg width="12" height="9" viewBox="0 0 12 9"><path d="M0 .750h12M2.500 4.250h7M4.700 7.750h2.600" stroke="#188038" stroke-width="1.300" fill="none"/></svg></div>
<div class="c b" style="left:181px;top:839px;width:80px;height:41px;">Vlookup</div>
<div style="left:265px;top:856px"><svg width="12" height="9" viewBox="0 0 12 9"><path d="M0 .750h12M2.500 4.250h7M4.700 7.750h2.600" stroke="#188038" stroke-width="1.300" fill="none"/></svg></div>
<div class="c b" style="left:282px;top:839px;width:99px;height:41px;">Consensus<br>Views</div>
<div style="left:385px;top:856px"><svg width="12" height="9" viewBox="0 0 12 9"><path d="M0 .750h12M2.500 4.250h7M4.700 7.750h2.600" stroke="#188038" stroke-width="1.300" fill="none"/></svg></div>
<div class="c b" style="left:402px;top:839px;width:109px;height:41px;">Opportunity<br>Name</div>
<div style="left:515px;top:856px"><svg width="12" height="9" viewBox="0 0 12 9"><path d="M0 .750h12M2.500 4.250h7M4.700 7.750h2.600" stroke="#188038" stroke-width="1.300" fill="none"/></svg></div>
<div class="c b" style="left:532px;top:839px;width:114px;height:41px;">Opportunity<br>ID</div>
<div style="left:650px;top:856px"><svg width="12" height="9" viewBox="0 0 12 9"><path d="M0 .750h12M2.500 4.250h7M4.700 7.750h2.600" stroke="#188038" stroke-width="1.300" fill="none"/></svg></div>
<div class="c b" style="left:667px;top:839px;width:97px;height:41px;">Account<br>Name</div>
<div style="left:768px;top:856px"><svg width="12" height="9" viewBox="0 0 12 9"><path d="M0 .750h12M2.500 4.250h7M4.700 7.750h2.600" stroke="#188038" stroke-width="1.300" fill="none"/></svg></div>
<div class="c b" style="left:785px;top:839px;width:80px;height:41px;">Created<br>Date</div>
<div style="left:869px;top:856px"><svg width="12" height="9" viewBox="0 0 12 9"><path d="M0 .750h12M2.500 4.250h7M4.700 7.750h2.600" stroke="#188038" stroke-width="1.300" fill="none"/></svg></div>
<div class="c b" style="left:886px;top:839px;width:80px;height:41px;">Close<br>Date</div>
<div style="left:970px;top:856px"><svg width="12" height="9" viewBox="0 0 12 9"><path d="M0 .750h12M2.500 4.250h7M4.700 7.750h2.600" stroke="#188038" stroke-width="1.300" fill="none"/></svg></div>
<div class="c b" style="left:987px;top:839px;width:115px;height:41px;">Days<br>Between</div>
<div style="left:1106px;top:856px"><svg width="12" height="9" viewBox="0 0 12 9"><path d="M0 .750h12M2.500 4.250h7M4.700 7.750h2.600" stroke="#188038" stroke-width="1.300" fill="none"/></svg></div>
<div class="c b" style="left:1123px;top:839px;width:98px;height:41px;">Stage</div>
<div style="left:1225px;top:856px"><svg width="12" height="9" viewBox="0 0 12 9"><path d="M0 .750h12M2.500 4.250h7M4.700 7.750h2.600" stroke="#188038" stroke-width="1.300" fill="none"/></svg></div>
<div class="c b" style="left:1242px;top:839px;width:128px;height:41px;">ACV/TCV</div>
<div style="left:1374px;top:856px"><svg width="12" height="9" viewBox="0 0 12 9"><path d="M0 .750h12M2.500 4.250h7M4.700 7.750h2.600" stroke="#188038" stroke-width="1.300" fill="none"/></svg></div>
<div class="c b" style="left:1391px;top:839px;width:80px;height:41px;">Contact<br>Email</div>
<div style="left:1475px;top:856px"><svg width="12" height="9" viewBox="0 0 12 9"><path d="M0 .750h12M2.500 4.250h7M4.700 7.750h2.600" stroke="#188038" stroke-width="1.300" fill="none"/></svg></div>
<div style="left:666px;top:473px;width:119px;height:63px;border:2px solid #2b67d4"></div>
<div style="left:779px;top:530px;width:11px;height:11px;border-radius:50%;background:#2b67d4;border:1px solid #fff"></div>
<div style="left:713px;top:456px"><svg width="12" height="18" viewBox="0 0 12 18"><path d="M1 1v13l3.200-3 2.300 5.200 2-.900L6.200 10.200H10.500z" fill="#111" stroke="#fff" stroke-width="1"/></svg></div>
<div style="left:0px;top:141px;width:1864px;height:1px;background:#c0c0c0;"></div>
<div style="left:0px;top:142px;width:1864px;height:23px;background:#fff;"></div>
<div style="left:46px;top:142px;width:1445px;height:23px;background:#e6f4ea;"></div>
<div style="left:667px;top:142px;width:117px;height:23px;background:#c6eed0;"></div>
<div style="left:0px;top:165px;width:1864px;height:1px;background:#c0c0c0;"></div>
<div style="left:0px;top:142px;width:45px;height:23px;background:#f8f9fa;"></div>
<div style="left:41px;top:142px;width:5px;height:24px;background:#c0c0c0;"></div>
<div style="left:0px;top:161px;width:46px;height:5px;background:#c0c0c0;"></div>
<div style="left:180px;top:142px;width:1px;height:23px;background:#c0c0c0;"></div>
<div class="ch" style="left:46px;width:134px;">A</div>
<div style="left:281px;top:142px;width:1px;height:23px;background:#c0c0c0;"></div>
<div class="ch" style="left:181px;width:100px;">B</div>
<div style="left:401px;top:142px;width:1px;height:23px;background:#c0c0c0;"></div>
<div class="ch" style="left:282px;width:119px;">C</div>
<div style="left:531px;top:142px;width:1px;height:23px;background:#c0c0c0;"></div>
<div class="ch" style="left:402px;width:129px;">D</div>
<div style="left:666px;top:142px;width:1px;height:23px;background:#c0c0c0;"></div>
<div class="ch" style="left:532px;width:134px;">E</div>
<div style="left:784px;top:142px;width:1px;height:23px;background:#c0c0c0;"></div>
<div class="ch" style="left:667px;width:117px;font-weight:700;color:#1e3a29;">F</div>
<div style="left:885px;top:142px;width:1px;height:23px;background:#c0c0c0;"></div>
<div class="ch" style="left:785px;width:100px;">G</div>
<div style="left:986px;top:142px;width:1px;height:23px;background:#c0c0c0;"></div>
<div class="ch" style="left:886px;width:100px;">H</div>
<div style="left:1122px;top:142px;width:1px;height:23px;background:#c0c0c0;"></div>
<div class="ch" style="left:987px;width:135px;">I</div>
<div style="left:1241px;top:142px;width:1px;height:23px;background:#c0c0c0;"></div>
<div class="ch" style="left:1123px;width:118px;">J</div>
<div style="left:1390px;top:142px;width:1px;height:23px;background:#c0c0c0;"></div>
<div class="ch" style="left:1242px;width:148px;">K</div>
<div style="left:1491px;top:142px;width:1px;height:23px;background:#c0c0c0;"></div>
<div class="ch" style="left:1391px;width:100px;">L</div>
<div style="left:1592px;top:142px;width:1px;height:23px;background:#c0c0c0;"></div>
<div class="ch" style="left:1492px;width:100px;">M</div>
<div style="left:1693px;top:142px;width:1px;height:23px;background:#c0c0c0;"></div>
<div class="ch" style="left:1593px;width:100px;">N</div>
<div style="left:1794px;top:142px;width:1px;height:23px;background:#c0c0c0;"></div>
<div class="ch" style="left:1694px;width:100px;">O</div>
<div class="ch" style="left:1795px;width:57px;overflow:hidden"><span style="display:block;width:100px">P</span></div>
<div style="left:1852px;top:142px;width:1px;height:24px;background:#c0c0c0;"></div>
<div style="left:0px;top:166px;width:45px;height:700px;background:#fff;"></div>
<div style="left:0px;top:474px;width:45px;height:61px;background:#d3e3fd;"></div>
<div style="left:0px;top:839px;width:45px;height:27px;background:#e6f4ea;"></div>
<div style="left:45px;top:166px;width:1px;height:700px;background:#c0c0c0;"></div>
<div style="left:0px;top:174px;width:45px;height:1px;background:#c8c8c8;"></div>
<div style="left:0px;top:195px;width:45px;height:1px;background:#c8c8c8;"></div>
<div style="left:0px;top:216px;width:45px;height:1px;background:#c8c8c8;"></div>
<div style="left:0px;top:237px;width:45px;height:1px;background:#c8c8c8;"></div>
<div style="left:0px;top:258px;width:45px;height:1px;background:#c8c8c8;"></div>
<div style="left:0px;top:279px;width:45px;height:1px;background:#c8c8c8;"></div>
<div style="left:0px;top:300px;width:45px;height:1px;background:#c8c8c8;"></div>
<div style="left:0px;top:324px;width:45px;height:1px;background:#c8c8c8;"></div>
<div style="left:0px;top:345px;width:45px;height:1px;background:#c8c8c8;"></div>
<div style="left:0px;top:366px;width:45px;height:1px;background:#c8c8c8;"></div>
<div style="left:0px;top:387px;width:45px;height:1px;background:#c8c8c8;"></div>
<div style="left:0px;top:430px;width:45px;height:1px;background:#c8c8c8;"></div>
<div style="left:0px;top:473px;width:45px;height:1px;background:#c8c8c8;"></div>
<div style="left:0px;top:535px;width:45px;height:1px;background:#c8c8c8;"></div>
<div style="left:0px;top:559px;width:45px;height:1px;background:#c8c8c8;"></div>
<div style="left:0px;top:580px;width:45px;height:1px;background:#c8c8c8;"></div>
<div style="left:0px;top:623px;width:45px;height:1px;background:#c8c8c8;"></div>
<div style="left:0px;top:666px;width:45px;height:1px;background:#c8c8c8;"></div>
<div style="left:0px;top:728px;width:45px;height:1px;background:#c8c8c8;"></div>
<div style="left:0px;top:753px;width:45px;height:1px;background:#c8c8c8;"></div>
<div style="left:0px;top:774px;width:45px;height:1px;background:#c8c8c8;"></div>
<div style="left:0px;top:795px;width:45px;height:1px;background:#c8c8c8;"></div>
<div style="left:0px;top:816px;width:45px;height:1px;background:#c8c8c8;"></div>
<div style="left:0px;top:838px;width:45px;height:1px;background:#c8c8c8;"></div>
<div class="rh" style="top:175px;height:20px;line-height:20px;">8</div>
<div class="rh" style="top:196px;height:20px;line-height:20px;">9</div>
<div class="rh" style="top:217px;height:20px;line-height:20px;">10</div>
<div class="rh" style="top:238px;height:20px;line-height:20px;">11</div>
<div class="rh" style="top:259px;height:20px;line-height:20px;">12</div>
<div class="rh" style="top:280px;height:20px;line-height:20px;">13</div>
<div class="rh" style="top:302px;height:23px;line-height:23px;">14</div>
<div class="rh" style="top:325px;height:20px;line-height:20px;">15</div>
<div class="rh" style="top:346px;height:20px;line-height:20px;">16</div>
<div class="rh" style="top:367px;height:20px;line-height:20px;">17</div>
<div class="rh" style="top:388px;height:42px;line-height:42px;">18</div>
<div class="rh" style="top:431px;height:42px;line-height:42px;">19</div>
<div class="rh" style="top:475px;height:61px;line-height:61px;font-weight:700;color:#041e49;">20</div>
<div class="rh" style="top:537px;height:23px;line-height:23px;">21</div>
<div class="rh" style="top:560px;height:20px;line-height:20px;">22</div>
<div class="rh" style="top:581px;height:42px;line-height:42px;">23</div>
<div class="rh" style="top:624px;height:42px;line-height:42px;">24</div>
<div class="rh" style="top:668px;height:61px;line-height:61px;">25</div>
<div class="rh" style="top:729px;height:24px;line-height:24px;">26</div>
<div class="rh" style="top:754px;height:20px;line-height:20px;">27</div>
<div class="rh" style="top:775px;height:20px;line-height:20px;">28</div>
<div class="rh" style="top:796px;height:20px;line-height:20px;">29</div>
<div class="rh" style="top:818px;height:21px;line-height:21px;">30</div>
<div class="rh" style="top:840px;height:41px;line-height:41px;">31</div>
<div class="rh" style="top:152px;height:21px;line-height:22px">7</div>
<div style="left:0px;top:142px;width:45px;height:24px;background:#f8f9fa;"></div>
<div style="left:41px;top:142px;width:5px;height:24px;background:#c0c0c0;"></div>
<div style="left:0px;top:161px;width:46px;height:5px;background:#c0c0c0;"></div>
<div style="left:0px;top:141px;width:46px;height:1px;background:#c0c0c0;"></div>
<div style="left:1853px;top:166px;width:11px;height:700px;background:#fff;"></div>
<div style="left:1854px;top:168px;width:9px;height:26px;border-radius:5px;background:#dfe1e5"></div>
</div></div>
<div style="left:0px;top:866px;width:1864px;height:14px;background:#fff;"></div>
<div style="left:0px;top:866px;width:46px;height:14px;background:#f8f9fa;"></div>
<div style="left:45px;top:866px;width:1px;height:14px;background:#e1e1e1;"></div>
<div style="left:48px;top:868px;width:1043px;height:9px;border-radius:5px;background:#dfe1e5"></div>
<div style="left:0px;top:879px;width:1864px;height:1px;background:#e1e3e6;"></div>
<div style="left:0px;top:866px;width:1864px;height:1px;background:#dcdcdc;"></div>
<div style="left:1821px;top:867px;width:33px;height:12px;border-left:1px solid #e3e5e8;border-right:1px solid #e3e5e8;background:#f8f9fa"></div>
<div style="left:1837px;top:867px;width:1px;height:12px;background:#e3e5e8;"></div>
<div style="left:1826.500px;top:870px"><svg width="4.500" height="6" viewBox="0 0 6 7"><path d="M5.500 0v7L0 3.500z" fill="#9aa0a6"/></svg></div>
<div style="left:1843.500px;top:870px"><svg width="4.500" height="6" viewBox="0 0 6 7"><path d="M.500 0v7L6 3.500z" fill="#9aa0a6"/></svg></div>
<div style="left:1852px;top:834px;width:12px;height:32px;background:#f8f9fa;border-left:1px solid #e3e5e8;border-top:1px solid #e3e5e8"></div>
<div style="left:1853px;top:850px;width:11px;height:1px;background:#e3e5e8;"></div>
<div style="left:1855.500px;top:840px"><svg width="6" height="3.500" viewBox="0 0 7 4"><path d="M0 4h7L3.500 0z" fill="#9aa0a6"/></svg></div>
<div style="left:1855.500px;top:856.500px"><svg width="6" height="3.500" viewBox="0 0 7 4"><path d="M0 0h7L3.500 4z" fill="#9aa0a6"/></svg></div>
<!-- ===== sheet tabs ===== -->
<div style="left:0;top:880px;width:1864px;height:36px;background:#f9fafc"></div>
<div style="left:52px;top:889px"><svg width="20" height="20" viewBox="0 0 24 24" class="ic"><path d="M19 13h-6v6h-2v-6H5v-2h6V5h2v6h6v2z"/></svg></div>
<div style="left:92px;top:889px"><svg width="20" height="20" viewBox="0 0 24 24" class="ic"><path d="M3 18h18v-2H3v2zm0-5h18v-2H3v2zm0-7v2h18V6H3z"/></svg></div>
<div class="tab ui" style="left:146px;letter-spacing:.4px" id="t1">Step 1: Download Detailed Org Report</div>
<div style="left:418.8px;top:896.05px"><svg width="8.400" height="5.900" viewBox="7 9 10 7" class="ic"><path d="M7 10l5 5 5-5z"/></svg></div>
<div class="tab ui" style="left:452px;letter-spacing:.4px" id="t2">Step 2: Download CRM Report</div>
<div style="left:670.8px;top:896.05px"><svg width="8.400" height="5.900" viewBox="7 9 10 7" class="ic"><path d="M7 10l5 5 5-5z"/></svg></div>
<div style="left:692px;top:880px;width:210px;height:36px;background:#e1e9f7"></div>
<div class="tab ui" style="left:704px;color:#0b57d0;font-weight:700;letter-spacing:.2px" id="t3">Step 3: Impact Analysis</div>
<div style="left:881.8px;top:896.05px"><svg width="8.400" height="5.900" viewBox="7 9 10 7" fill="#0b57d0"><path d="M7 10l5 5 5-5z"/></svg></div>
<div class="tab ui" style="left:915px;letter-spacing:.4px" id="t4">Step 4: ROI Calulator</div>
<div style="left:1070.8px;top:896.05px"><svg width="8.400" height="5.900" viewBox="7 9 10 7" class="ic"><path d="M7 10l5 5 5-5z"/></svg></div>
<!-- ===== side panel ===== -->
<div style="left:1864px;top:60px;width:56px;height:856px;background:#f9fafc"></div>
<!-- calendar -->
<div style="left:1882.500px;top:77.500px"><svg width="19" height="19" viewBox="0 0 20 20"><rect x="0" y="0" width="20" height="20" rx="2" fill="#fff"/><path d="M0 2a2 2 0 0 1 2-2h13v4.500H4.500V15H0z" fill="#4285f4"/><path d="M15 0h3a2 2 0 0 1 2 2v13h-4.500V4.500H15z" fill="#fbbc04"/><path d="M20 15v5h-5v-4.500h.500V15z" fill="#ea4335"/><path d="M15 20l5-5h-5z" fill="#ea4335"/><path d="M4.500 15.500H15V20H2a2 2 0 0 1-2-2v-3h4.500z" fill="#34a853"/><path d="M15 15.500h5L15 20z" fill="#188038"/><rect x="4.500" y="4.500" width="11" height="11" fill="#fff"/><text x="10" y="13.300" font-family="Liberation Sans,sans-serif" font-size="8" font-weight="700" fill="#4285f4" text-anchor="middle">31</text></svg></div>
<!-- keep -->
<div style="left:1882.500px;top:133px"><svg width="19" height="19" viewBox="0 0 20 20"><rect width="20" height="20" rx="2" fill="#fbbc04"/><path d="M10 4a4 4 0 0 0-2.300 7.300V13h4.600v-1.700A4 4 0 0 0 10 4zM8 14h4v1.600H8z" fill="#fff"/></svg></div>
<!-- tasks -->
<div style="left:1881px;top:188px"><svg width="22" height="22" viewBox="0 0 22 22"><circle cx="11" cy="12" r="7.300" fill="none" stroke="#2684fc" stroke-width="3"/><path d="M7.500 11.500l3 3L19 5" fill="none" stroke="#0066da" stroke-width="3" stroke-linecap="round" stroke-linejoin="round"/></svg></div>
<!-- contacts -->
<div style="left:1883.500px;top:246px"><svg width="18" height="18" viewBox="0 0 20 20"><circle cx="10" cy="4.500" r="3.700" fill="#1a73e8"/><path d="M3 18v-3.500c0-2.500 3-4 7-4s7 1.500 7 4V18z" fill="#1a73e8"/><path d="M1.500 18v-3c0-1.700 1.500-2.800 3.500-3.300V18z" fill="#8ab4f8"/></svg></div>
<!-- maps -->
<div style="left:1885.500px;top:301px"><svg width="13.500" height="19.400" viewBox="0 0 16 23"><path d="M8 0C3.600 0 0 3.600 0 8c0 5.500 8 15 8 15s8-9.500 8-15c0-4.400-3.600-8-8-8z" fill="#34a853"/><path d="M8 0C3.600 0 0 3.600 0 8c0 1.800.800 3.900 2 6L13.600 2.300A8 8 0 0 0 8 0z" fill="#ea4335"/><path d="M2 14c.600 1.100 1.300 2.200 2 3.200L14.900 4A8 8 0 0 0 13.600 2.300z" fill="#fbbc04"/><path d="M.800 4.700L5.600 9.500 13.600 2.300A8 8 0 0 0 .800 4.700z" fill="#4285f4" opacity=".0"/><path d="M14.900 4L8.500 11.500 4 17.200c1.900 3 4 5.800 4 5.800s8-9.500 8-15c0-1.500-.400-2.800-1.100-4z" fill="#34a853"/><path d="M.700 4.800A8 8 0 0 0 0 8c0 1.800.800 3.900 2 6l4-4.800z" fill="#1a73e8"/><circle cx="8" cy="8" r="2.800" fill="#fff"/></svg></div>
<div style="left:1882px;top:355px;width:20px;height:1px;background:#dadce0"></div>
<!-- asterisk -->
<div style="left:1883.500px;top:391.500px"><svg width="17" height="17" viewBox="0 0 22 22" fill="none" stroke="#d81b4d" stroke-width="3.600" stroke-linecap="round"><path d="M11 2.500v17M3.700 6.800l14.600 8.400M18.300 6.800L3.700 15.200"/></svg></div>
<!-- miro -->
<div style="left:1882px;top:446px;width:20px;height:20px;border-radius:4px;background:#ffd02f"></div>
<div style="left:1882px;top:446px"><svg width="20" height="20" viewBox="0 0 20 20" fill="#050038"><path d="M4.500 4h2.700l1.500 3.200L7 16H4.300L6 7.200zM8.700 4h2.700l1.500 3.200L11.200 16H8.500l1.700-8.800zM12.900 4h2.700l1.500 3.200L15.400 16h-2.700l1.700-8.800z"/></svg></div>
<!-- orange hex -->
<div style="left:1881px;top:501px"><svg width="22" height="22" viewBox="0 0 22 22"><path d="M11 2l5.500 3.200-2 1.600L11 4.800 6 7.700V5z" fill="#f28b30"/><path d="M4 6.200l2.300-1.300v8.800L4 15.300z" fill="#e8710a"/><path d="M18 7v9l-2.300 1.300V8.400z" fill="#e8710a"/><path d="M5.500 16.200l2-1.500 3.500 2.100 4.700-2.800v2.800L11 19.800z" fill="#f9ab00" opacity=".0"/><path d="M5.500 16.500l2-1.600 3.500 2.200 5-3v2.800L11 20z" fill="#f28b30"/></svg></div>
<!-- plus -->
<div style="left:1880px;top:557px"><svg width="23" height="23" viewBox="0 0 24 24" fill="#1f1f1f"><path d="M19.500 12.900h-6.600v6.600h-1.800v-6.600H4.500v-1.800h6.600V4.500h1.800v6.600h6.600z"/></svg></div>
<div style="left:1881px;top:877px"><svg width="22" height="22" viewBox="0 0 24 24" fill="#5f6368"><path d="M10 6L8.590 7.410 13.170 12l-4.580 4.590L10 18l6-6z"/></svg></div>
</div></body></html>
